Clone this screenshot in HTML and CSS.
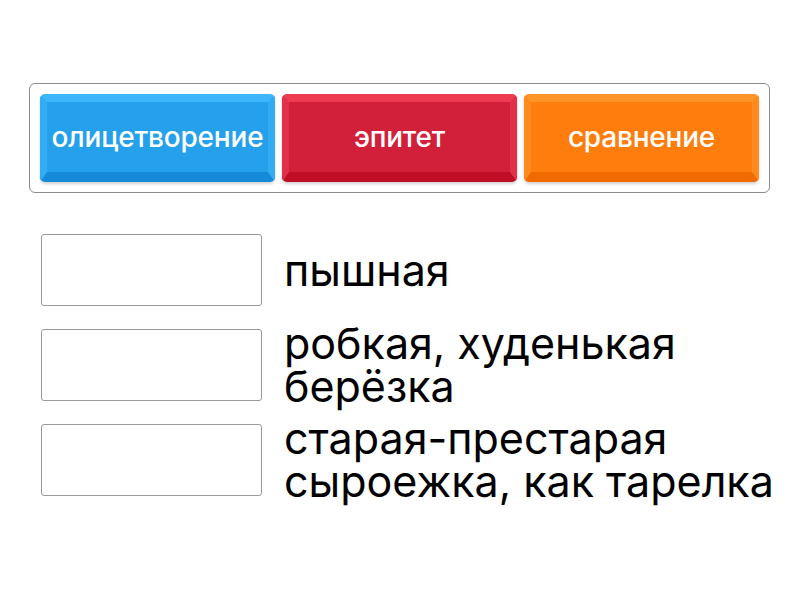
FILE: index.html
```html
<!DOCTYPE html>
<html lang="ru">
<head>
<meta charset="utf-8">
<link rel="stylesheet" href="styles.css">
</head>
<body>
<div class="bank">
  <div class="tile blue">олицетворение</div>
  <div class="tile red">эпитет</div>
  <div class="tile orange">сравнение</div>
</div>
<div class="rows">
  <div class="row"><div class="slot"></div><div class="label">пышная</div></div>
  <div class="row"><div class="slot"></div><div class="label">робкая, худенькая<br>берёзка</div></div>
  <div class="row"><div class="slot"></div><div class="label">старая-престарая<br>сыроежка, как тарелка</div></div>
</div>
</body>
</html>
```
FILE: styles.css
```css
html, body {
  margin: 0;
  padding: 0;
  background: #fff;
  font-family: Inter, "Noto Sans", sans-serif;
}
body {
  min-height: 600px;
}
.bank {
  box-sizing: border-box;
  width: 741px;
  height: 110px;
  margin: 83px 0 0 29px;
  border: 1px solid #8c8c8c;
  border-radius: 6px;
  padding: 10px;
  display: flex;
  gap: 7px;
}
.tile {
  box-sizing: border-box;
  width: 235px;
  height: 88px;
  border-radius: 5px;
  border-style: solid;
  border-width: 8px 7px 10px 7px;
  display: flex;
  align-items: center;
  justify-content: center;
  color: #fff;
  font-size: 28px;
  font-weight: 500;
  letter-spacing: -0.2px;
  white-space: nowrap;
  box-shadow: 0 2px 3px rgba(0,0,0,0.18);
}
.blue {
  background: #25a1ec;
  border-color: #3db6fb #33acf4 #168ad9 #33acf4;
}
.red {
  background: #d3203a;
  border-color: #ef3b52 #e3304a #be0f27 #e3304a;
}
.orange {
  background: #fe7d0d;
  border-color: #ff9428 #ff8a1d #f06a00 #ff8a1d;
}
.rows {
  margin: 41px 0 0 41px;
  padding-bottom: 40px;
  display: flex;
  flex-direction: column;
  gap: 23px;
}
.row {
  display: flex;
  align-items: center;
  height: 72px;
}
.slot {
  box-sizing: border-box;
  width: 221px;
  height: 72px;
  border: 1.5px solid #999;
  border-radius: 3px;
  flex: none;
}
.label {
  margin-left: 22px;
  font-size: 43px;
  line-height: 43px;
  color: #000;
  white-space: nowrap;
}
```
